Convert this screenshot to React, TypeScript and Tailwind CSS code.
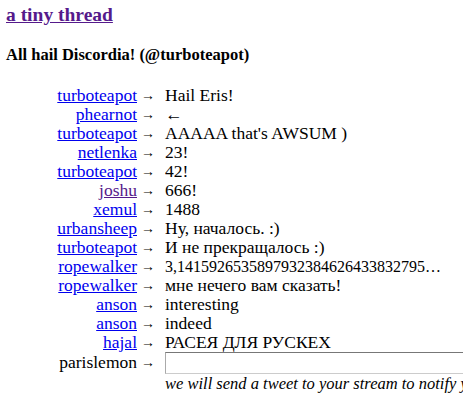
const posts: { name: string; text: string; visited?: boolean; small?: boolean }[] = [
  { name: "turboteapot", text: "Hail Eris!" },
  { name: "phearnot", text: "←" },
  { name: "turboteapot", text: "AAAAA that's AWSUM )" },
  { name: "netlenka", text: "23!" },
  { name: "turboteapot", text: "42!" },
  { name: "joshu", text: "666!", visited: true },
  { name: "xemul", text: "1488" },
  { name: "urbansheep", text: "Ну, началось. :)" },
  { name: "turboteapot", text: "И не прекращалось :)" },
  { name: "ropewalker", text: "3,1415926535897932384626433832795…", small: true },
  { name: "ropewalker", text: "мне нечего вам сказать!" },
  { name: "anson", text: "interesting" },
  { name: "anson", text: "indeed" },
  { name: "hajal", text: "РАСЕЯ ДЛЯ РУСКЕХ" },
];

export default function App() {
  return (
    <div className="h-[414px] w-[463px] overflow-hidden bg-white font-['Liberation_Serif',serif] text-black">
      <div className="w-[700px] px-[6px] pt-[2px]">
        <h1 className="text-[19.5px] font-bold leading-[26px]">
          <a href="#" className="text-[#551a8b] underline">a tiny thread</a>
        </h1>
        <h2 className="mt-[17px] text-[16.5px] font-bold leading-[20px]">All hail Discordia! (@turboteapot)</h2>

        <div className="mt-[21px] grid grid-cols-[131px_28px_1fr] text-[17.5px] leading-[19px] whitespace-nowrap">
          {posts.map((p, i) => (
            <div key={i} className="contents">
              <div className="text-right">
                <a href="#" className={p.visited ? "text-[#551a8b] underline" : "text-[#0000ee] underline"}>
                  {p.name}
                </a>
              </div>
              <div className="pl-[4px] text-[14px]">→</div>
              <div className={p.small ? "text-[16px]" : ""}>{p.text}</div>
            </div>
          ))}
          <div className="mt-[1px] text-right">parislemon</div>
          <div className="mt-[1px] pl-[4px] text-[14px]">→</div>
          <div>
            <input
              type="text"
              className="block h-[22px] w-[360px] border border-t-[#777] border-x-[#aaa] border-b-[#ccc] bg-white outline-none"
            />
            <div className="text-[16.5px] italic">we will send a tweet to your stream to notify you about new posts in this thread</div>
          </div>
        </div>
      </div>
    </div>
  );
}
